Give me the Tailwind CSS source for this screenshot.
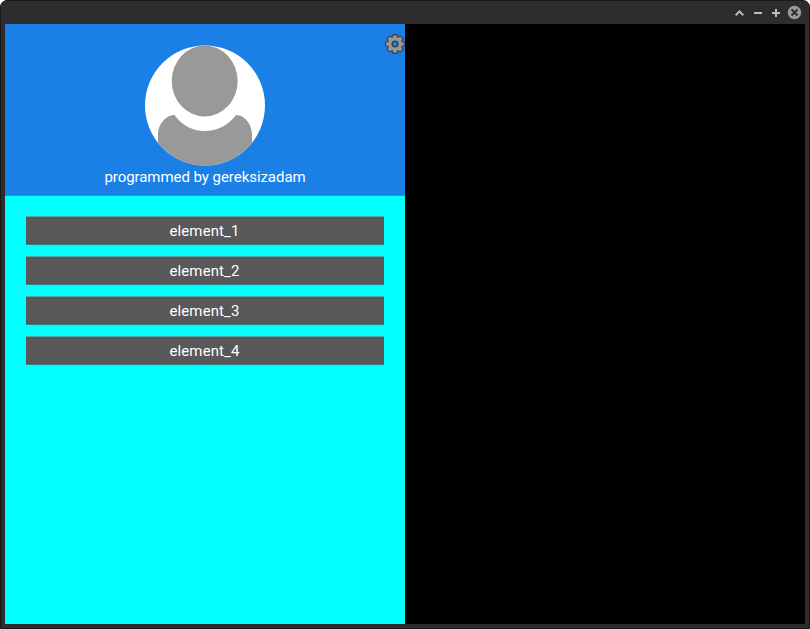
<!DOCTYPE html>
<html lang="en">
<head>
<meta charset="utf-8">
<title>Navigation drawer</title>
<script src="https://cdn.jsdelivr.net/npm/@tailwindcss/browser@4"></script>
</head>
<body class="bg-white">
<div class="flex h-[629px] w-[810px] flex-col overflow-hidden rounded-t-[7px] border border-[#181818] bg-[#2d2d2d] px-1 pb-1 font-[Roboto,sans-serif] text-[15px] text-white">
  <header class="flex h-[23px] shrink-0 items-center justify-end">
    <svg class="h-[23px] w-[74px]" viewBox="731 1 74 23" fill="none" stroke="#bdbdbd" stroke-width="2">
      <path d="M735.7 15.2 739.5 11.4 743.3 15.2M754 13h8M772 13h8M776 9v8"/>
      <circle cx="794.5" cy="12.5" r="6.7" fill="#999" stroke="none"/>
      <path d="m791.5 9.5 6 6m0-6-6 6" stroke="#2d2d2d"/>
    </svg>
  </header>
  <main class="flex h-[600px]">
    <aside class="flex w-[400px] flex-col bg-[#00ffff]">
      <section class="relative flex h-[172px] flex-col items-center border-b border-[#149ceb] bg-[#1a80e6] pt-[21px]">
        <svg class="h-[121px] w-[120px]" viewBox="145 45 120 121">
          <defs><clipPath id="face"><circle cx="205" cy="105.5" r="60"/></clipPath></defs>
          <g clip-path="url(#face)">
            <path fill="#fff" d="M145 45h120v121H145z"/>
            <ellipse cx="204.7" cy="81" rx="33" ry="35.5" fill="#999"/>
            <path fill="#999" d="M158 166v-31C158 124 166 115 174.500 115C182 125.500 193 131 204.500 131C217 131 228 125.500 236 115C244.500 115 252 124 252 135v31z"/>
          </g>
        </svg>
        <p class="h-[22px] leading-[22px] tracking-[-0.05px]">programmed by gereksizadam</p>
        <svg class="absolute top-[10px] right-0 size-5" viewBox="-10 -10 20 20" fill="#999" stroke="#383d43" stroke-width="1.1" stroke-linejoin="round">
          <path d="M-1.900-9.400H1.900L2.300-7.100 3.300-6.700 5.300-8.100 8.100-5.300 6.700-3.300 7.100-2.300 9.400-1.900V1.900L7.100 2.300 6.700 3.300 8.100 5.300 5.300 8.100 3.300 6.700 2.300 7.100 1.900 9.400H-1.900L-2.300 7.100-3.300 6.700-5.300 8.100-8.100 5.300-6.700 3.300-7.100 2.300-9.400 1.900V-1.900L-7.100-2.300-6.700-3.300-8.100-5.300-5.300-8.100-3.300-6.700-2.300-7.100Z"/>
          <circle r="2.900" fill="#1a80e6" stroke-width="1.400"/>
        </svg>
      </section>
      <nav class="flex flex-col gap-[11px] px-[21px] pt-5">
        <button class="h-[29px] border-t border-b border-t-[#58a4a4] border-b-[#388080] bg-[#585858] pt-0.5 pr-px leading-[25px] tracking-[0.1px]">element_1</button>
        <button class="h-[29px] border-t border-b border-t-[#58a4a4] border-b-[#388080] bg-[#585858] pt-0.5 pr-px leading-[25px] tracking-[0.1px]">element_2</button>
        <button class="h-[29px] border-t border-b border-t-[#58a4a4] border-b-[#388080] bg-[#585858] pt-0.5 pr-px leading-[25px] tracking-[0.1px]">element_3</button>
        <button class="h-[29px] border-t border-b border-t-[#58a4a4] border-b-[#388080] bg-[#585858] pt-0.5 pr-px leading-[25px] tracking-[0.1px]">element_4</button>
      </nav>
    </aside>
    <div class="w-[400px] bg-black"></div>
  </main>
</div>
</body>
</html>
